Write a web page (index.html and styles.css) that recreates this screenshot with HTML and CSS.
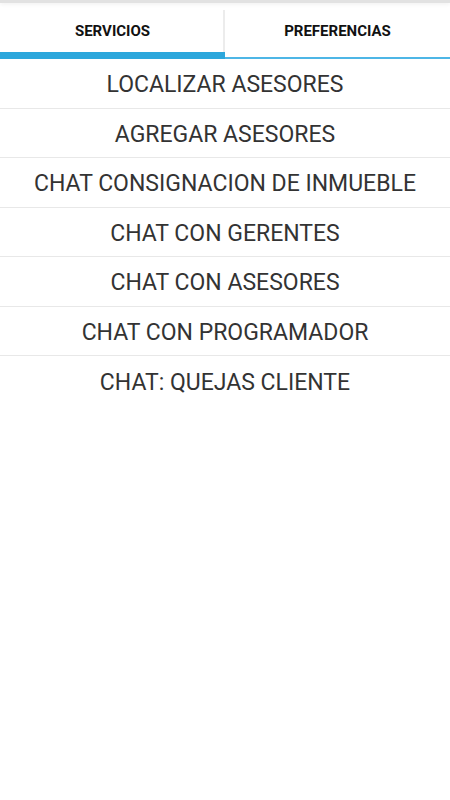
FILE: index.html
```
<!DOCTYPE html>
<html lang="es">
<head>
  <meta charset="UTF-8">
  <meta name="viewport" content="width=device-width, initial-scale=1.0">
  <title>Servicios</title>
  <link rel="stylesheet" href="styles.css">
</head>
<body>
  <div class="statusbar"></div>
  <div class="tabs">
    <div class="tab active"><span>SERVICIOS</span></div>
    <div class="tab"><span>PREFERENCIAS</span></div>
  </div>
  <ul class="menu">
    <li>LOCALIZAR ASESORES</li>
    <li>AGREGAR ASESORES</li>
    <li>CHAT CONSIGNACION DE INMUEBLE</li>
    <li>CHAT CON GERENTES</li>
    <li>CHAT CON ASESORES</li>
    <li>CHAT CON PROGRAMADOR</li>
    <li>CHAT: QUEJAS CLIENTE</li>
  </ul>
</body>
</html>
```

FILE: styles.css
```
* {
  margin: 0;
  padding: 0;
  box-sizing: border-box;
}

body {
  width: 450px;
  height: 800px;
  background: #fff;
  font-family: Roboto, 'Noto Sans', sans-serif;
}

.statusbar {
  height: 3px;
  background: #e2e2e2;
  box-shadow: 0 1px 4px rgba(0, 0, 0, 0.08);
}

.tabs {
  display: flex;
  height: 56px;
  border-bottom: 2px solid #4db6e6;
}

.tab {
  flex: 1;
  display: flex;
  justify-content: center;
  align-items: center;
  padding-top: 1px;
  font-size: 15px;
  font-weight: bold;
  color: #111;
  position: relative;
}

.tab:first-child::before {
  content: "";
  position: absolute;
  top: 7px;
  bottom: 0;
  right: 0;
  width: 2px;
  background: #ececec;
}

.tab.active::after {
  content: "";
  position: absolute;
  left: 0;
  right: 0;
  bottom: -2px;
  height: 7px;
  background: #2ca7dc;
}

.menu {
  list-style: none;
}

.menu li {
  height: 49.5px;
  display: flex;
  justify-content: center;
  align-items: center;
  padding-top: 3px;
  font-size: 23px;
  color: #333;
  border-bottom: 1.5px solid #e8e8e8;
}

.menu li:last-child {
  border-bottom: none;
}
```
